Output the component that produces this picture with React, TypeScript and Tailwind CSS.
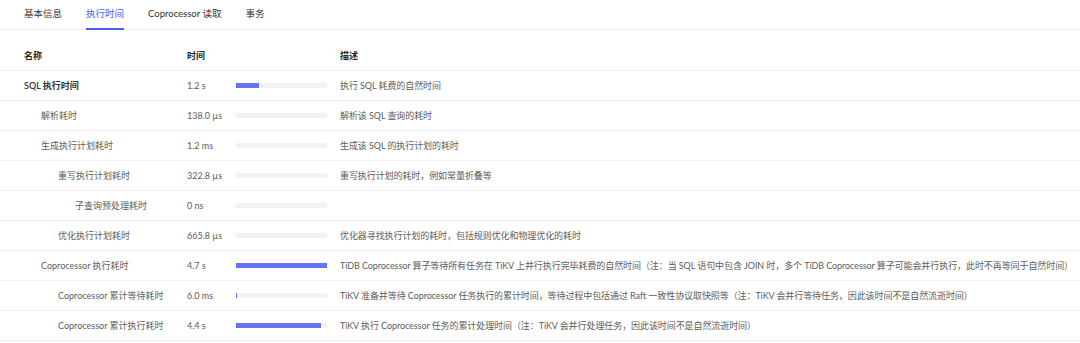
import React from "react";

type Row = { name: string; level: number; time: string; fill: number; desc: string; bold?: boolean };

const rows: Row[] = [
  { name: "SQL 执行时间", level: 0, time: "1.2 s", fill: 1.2 / 4.7, desc: "执行 SQL 耗费的自然时间", bold: true },
  { name: "解析耗时", level: 1, time: "138.0 µs", fill: 0, desc: "解析该 SQL 查询的耗时" },
  { name: "生成执行计划耗时", level: 1, time: "1.2 ms", fill: 0, desc: "生成该 SQL 的执行计划的耗时" },
  { name: "重写执行计划耗时", level: 2, time: "322.8 µs", fill: 0, desc: "重写执行计划的耗时，例如常量折叠等" },
  { name: "子查询预处理耗时", level: 3, time: "0 ns", fill: 0, desc: "" },
  { name: "优化执行计划耗时", level: 2, time: "665.8 µs", fill: 0, desc: "优化器寻找执行计划的耗时，包括规则优化和物理优化的耗时" },
  { name: "Coprocessor 执行耗时", level: 1, time: "4.7 s", fill: 1, desc: "TiDB Coprocessor 算子等待所有任务在 TiKV 上并行执行完毕耗费的自然时间（注：当 SQL 语句中包含 JOIN 时，多个 TiDB Coprocessor 算子可能会并行执行，此时不再等同于自然时间）" },
  { name: "Coprocessor 累计等待耗时", level: 2, time: "6.0 ms", fill: 1 / 91, desc: "TiKV 准备并等待 Coprocessor 任务执行的累计时间，等待过程中包括通过 Raft 一致性协议取快照等（注：TiKV 会并行等待任务，因此该时间不是自然流逝时间）" },
  { name: "Coprocessor 累计执行耗时", level: 2, time: "4.4 s", fill: 4.4 / 4.7, desc: "TiKV 执行 Coprocessor 任务的累计处理时间（注：TiKV 会并行处理任务，因此该时间不是自然流逝时间）" },
];

const tabs = ["基本信息", "执行时间", "Coprocessor 读取", "事务"];

export default function App() {
  return (
    <div
      className="w-[1080px] h-[343px] bg-white text-[9px] text-[#5c5c5c] overflow-hidden"
      style={{ fontFamily: 'Lato, "Noto Sans CJK SC", sans-serif' }}
    >
      <div className="flex gap-[24px] pl-[24px] h-[30px] border-b border-[#f0f0f0] text-[9.5px]">
        {tabs.map((t, i) => (
          <div
            key={t}
            className={
              "flex items-center h-full relative " +
              (i === 1 ? "text-[#4b5cf0]" : "text-[#333]")
            }
          >
            {t}
            {i === 1 && <div className="absolute left-0 right-0 bottom-[-1px] h-[2px] bg-[#4b5cf0]" />}
          </div>
        ))}
      </div>
      <div className="mt-[11px]">
        <div className="flex h-[30px] items-center border-b border-[#f0f0f0] font-semibold text-[#262626]">
          <div className="w-[187px] pl-[24px] shrink-0">名称</div>
          <div className="w-[153px] shrink-0">时间</div>
          <div>描述</div>
        </div>
        {rows.map((r) => (
          <div key={r.name} className="flex h-[30px] items-center border-b border-[#f0f0f0]">
            <div
              className={"w-[187px] shrink-0 whitespace-nowrap " + (r.bold ? "font-semibold text-[#333]" : "")}
              style={{ paddingLeft: 24 + r.level * 17 }}
            >
              {r.name}
            </div>
            <div className="w-[49px] shrink-0 whitespace-nowrap">{r.time}</div>
            <div className="w-[91px] h-[5px] bg-[#f2f2f2] shrink-0 mr-[13px]">
              <div className="h-full bg-[#6474f5]" style={{ width: r.fill * 91 }} />
            </div>
            <div className="whitespace-nowrap tracking-[-0.08px]">{r.desc}</div>
          </div>
        ))}
      </div>
    </div>
  );
}
